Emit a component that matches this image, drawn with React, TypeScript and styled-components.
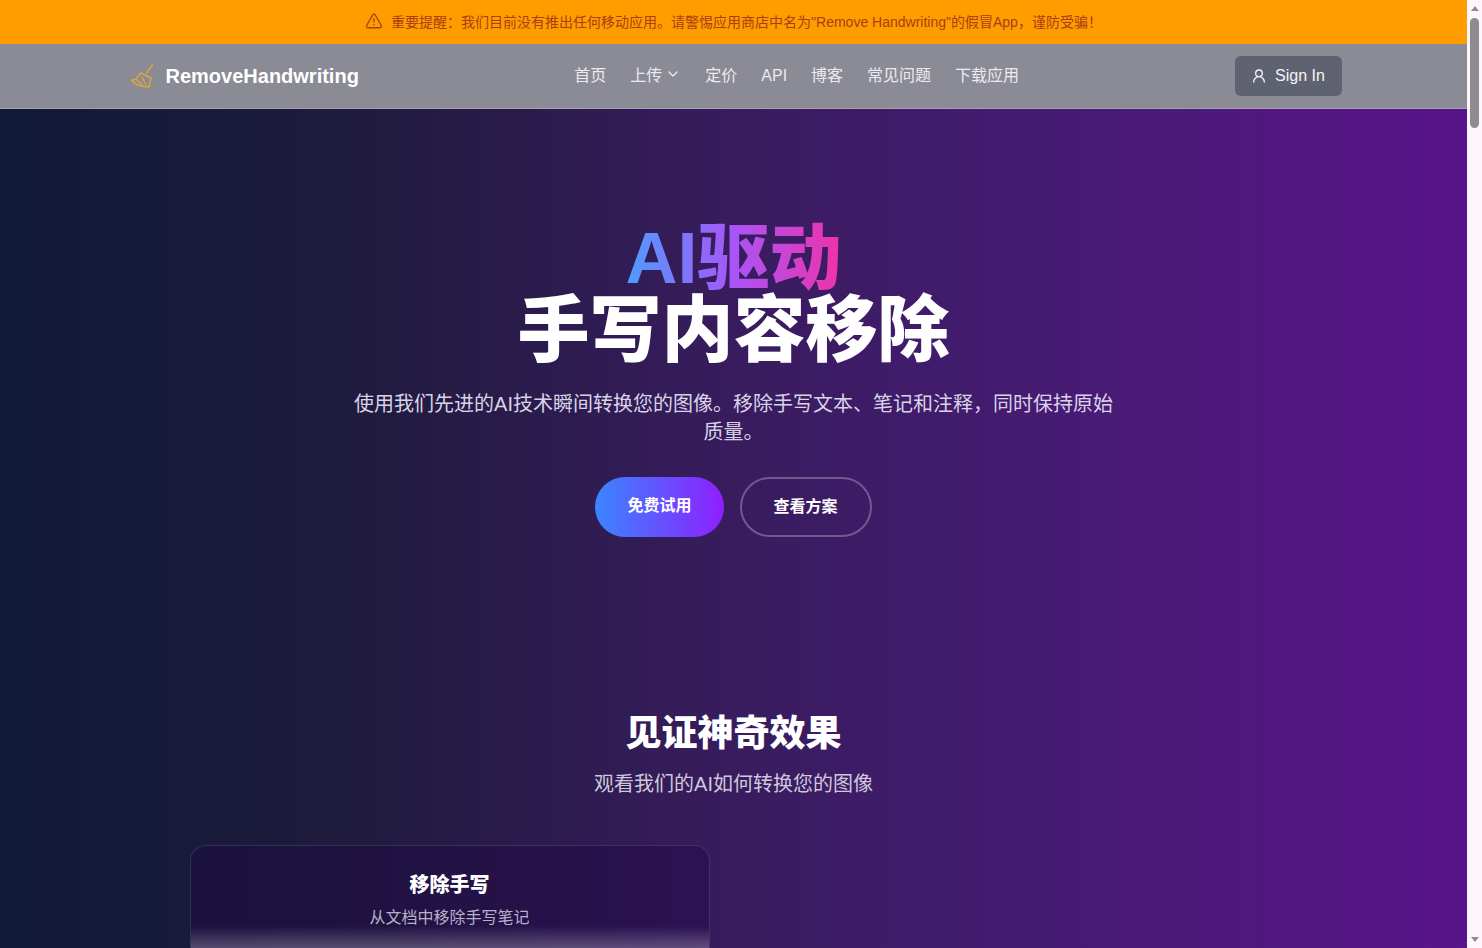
import styled, { createGlobalStyle } from 'styled-components';
import { TriangleAlert, ChevronDown, UserRound } from 'lucide-react';

const cjkSans = '"Liberation Sans", "Noto Sans CJK SC", sans-serif';

const GlobalStyle = createGlobalStyle`
  body {
    margin: 0;
    font-family: ${cjkSans};
    background: #101a36;
  }
`;

const Page = styled.div`
  width: calc(100% - 15px);
  padding-bottom: 120px;
  background: linear-gradient(90deg, #101a36 0%, #201b3e 25%, #381c5e 50%, #481b76 75%, #58148a 100%);
`;

const ScrollRail = styled.div`
  position: fixed;
  top: 0;
  right: 0;
  bottom: 0;
  width: 15px;
  background: #fdf7fd;
  display: flex;
  flex-direction: column;
  align-items: center;
  justify-content: space-between;
  padding: 6px 0;
  box-sizing: border-box;
`;

const ScrollArrow = styled.span<{ $down?: boolean }>`
  width: 0;
  height: 0;
  border-left: 4px solid transparent;
  border-right: 4px solid transparent;
  border-top: ${(p) => (p.$down ? '5px solid #8f8c8f' : '0')};
  border-bottom: ${(p) => (p.$down ? '0' : '5px solid #8f8c8f')};
`;

const ScrollThumb = styled.div`
  position: absolute;
  top: 18px;
  left: 3px;
  width: 9px;
  height: 110px;
  border-radius: 5px;
  background: #8f8c8f;
`;

const Banner = styled.div`
  height: 44px;
  padding-bottom: 2px;
  box-sizing: border-box;
  background: #ff9c00;
  color: #a8400f;
  font-size: 14px;
  display: flex;
  align-items: center;
  justify-content: center;
  gap: 8px;
`;

const Nav = styled.header`
  height: 65px;
  background: #8a8b95;
  border-bottom: 1px solid #a79fb0;
  box-sizing: border-box;
  padding: 0 125.5px;
  display: flex;
  align-items: center;
  justify-content: space-between;
`;

const Brand = styled.div`
  display: flex;
  align-items: center;
  gap: 8px;
  color: #fff;
  font-size: 20px;
  font-weight: 700;
`;

const NavLinks = styled.nav`
  display: flex;
  align-items: center;
  gap: 24px;
`;

const NavLink = styled.a<{ $latin?: boolean }>`
  display: flex;
  align-items: center;
  gap: 3px;
  color: #eceaf0;
  font-size: 16px;
  padding-bottom: ${(p) => (p.$latin ? '0' : '4px')};
`;

const SignIn = styled.button`
  height: 40px;
  width: 107px;
  border: 0;
  border-radius: 6px;
  background: #5f6270;
  color: #f5f5f8;
  font: 16px ${cjkSans};
  display: flex;
  align-items: center;
  justify-content: center;
  gap: 8px;
`;

const Hero = styled.section`
  padding-top: 113px;
  display: flex;
  flex-direction: column;
  align-items: center;
  text-align: center;
`;

const Title = styled.h1`
  margin: 0;
  font-size: 72px;
  line-height: 72px;
  font-weight: 900;
  color: #fff;
`;

const TitleAccent = styled.span`
  display: block;
  background: linear-gradient(90deg, #4d9dff, #a855f7, #f032a8);
  background-clip: text;
  -webkit-background-clip: text;
  color: transparent;
  width: fit-content;
  margin: 0 auto;
`;

const Lead = styled.p`
  margin: 24px 0 0;
  width: 768px;
  font-size: 20px;
  line-height: 28px;
  color: #d8d3e6;
`;

const Actions = styled.div`
  margin-top: 31px;
  display: flex;
  gap: 16px;
`;

const CtaButton = styled.button<{ $outline?: boolean }>`
  height: 60px;
  padding: 0 32px ${(p) => (p.$outline ? '5px' : '7px')};
  border-radius: 30px;
  border: ${(p) => (p.$outline ? '2px solid #75588f' : '0')};
  background: ${(p) => (p.$outline ? 'transparent' : 'linear-gradient(90deg, #3a86ff, #8f1fff)')};
  color: #fff;
  font: 700 16px ${cjkSans};
`;

const Showcase = styled.section`
  margin-top: 177px;
  display: flex;
  flex-direction: column;
  align-items: center;
  text-align: center;
`;

const ShowcaseTitle = styled.h2`
  margin: 0;
  font-size: 36px;
  line-height: 40px;
  font-weight: 900;
  color: #fff;
`;

const ShowcaseLead = styled.p`
  margin: 16px 0 0;
  font-size: 20px;
  line-height: 28px;
  color: #cfc8dc;
`;

const CardGrid = styled.div`
  margin-top: 47px;
  width: 1088px;
  display: grid;
  grid-template-columns: 1fr 1fr;
  gap: 48px;
`;

const Card = styled.article`
  border: 1px solid rgba(255, 255, 255, 0.12);
  border-radius: 16px;
  background: rgba(30, 5, 70, 0.4);
  overflow: hidden;
`;

const CardHead = styled.div`
  padding: 25px 24px 0;
`;

const CardTitle = styled.h3`
  margin: 0;
  font-size: 20px;
  line-height: 28px;
  font-weight: 900;
  color: #fff;
`;

const CardText = styled.p`
  margin: 7px 0 0;
  font-size: 16px;
  line-height: 24px;
  color: #b8b0c8;
`;

const CardImage = styled.div`
  height: 320px;
  margin-top: -4px;
  background: linear-gradient(180deg, rgba(255, 255, 255, 0) 0, rgba(255, 255, 255, 0.25) 22px);
`;

function BroomIcon() {
  return (
    <svg width="32" height="32" viewBox="0 0 32 32" fill="none" stroke="#d9a63f" strokeWidth="1.5" strokeLinecap="round" strokeLinejoin="round">
      <path d="M26.5 5l-6 8" />
      <path d="M15 13l10 5-2 9c-7 0-14-2-17.500-7l4-.5 5.500-6.500z" />
      <path d="M11 20l5 5M16 17l4 8" />
    </svg>
  );
}

export default function App() {
  return (
    <>
      <GlobalStyle />
      <Page>
        <Banner>
          <TriangleAlert size={18} strokeWidth={1.8} />
          <span>重要提醒：我们目前没有推出任何移动应用。请警惕应用商店中名为"Remove Handwriting"的假冒App，谨防受骗！</span>
        </Banner>
        <Nav>
          <Brand>
            <BroomIcon />
            RemoveHandwriting
          </Brand>
          <NavLinks>
            <NavLink>首页</NavLink>
            <NavLink>
              上传
              <ChevronDown size={16} />
            </NavLink>
            <NavLink>定价</NavLink>
            <NavLink $latin>API</NavLink>
            <NavLink>博客</NavLink>
            <NavLink>常见问题</NavLink>
            <NavLink>下载应用</NavLink>
          </NavLinks>
          <SignIn>
            <UserRound size={16} />
            Sign In
          </SignIn>
        </Nav>
        <Hero>
          <Title>
            <TitleAccent>AI驱动</TitleAccent>
            手写内容移除
          </Title>
          <Lead>使用我们先进的AI技术瞬间转换您的图像。移除手写文本、笔记和注释，同时保持原始质量。</Lead>
          <Actions>
            <CtaButton>免费试用</CtaButton>
            <CtaButton $outline>查看方案</CtaButton>
          </Actions>
        </Hero>
        <Showcase>
          <ShowcaseTitle>见证神奇效果</ShowcaseTitle>
          <ShowcaseLead>观看我们的AI如何转换您的图像</ShowcaseLead>
          <CardGrid>
            <Card>
              <CardHead>
                <CardTitle>移除手写</CardTitle>
                <CardText>从文档中移除手写笔记</CardText>
              </CardHead>
              <CardImage />
            </Card>
          </CardGrid>
        </Showcase>
      </Page>
      <ScrollRail>
        <ScrollArrow />
        <ScrollThumb />
        <ScrollArrow $down />
      </ScrollRail>
    </>
  );
}
